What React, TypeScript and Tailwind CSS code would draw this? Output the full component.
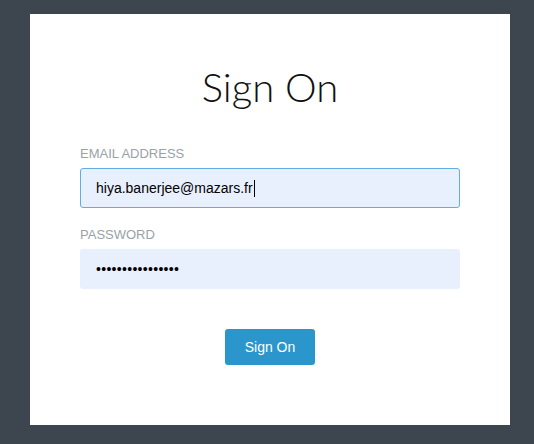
export default function App() {
  return (
    <div className="w-[534px] h-[444px] bg-[#3d464e] pt-[14px] pl-[30px]">
      <div className="w-[480px] h-[411px] bg-white px-[50px] flex flex-col">
        <h1 className="text-center text-[40px] font-light text-[#111] mt-[49px] leading-[48px] [font-family:Lato,'Open_Sans',sans-serif]">
          Sign On
        </h1>
        <div className="mt-[35px] text-[13px] leading-[16px] text-[#9aa2a8] uppercase [font-family:'Liberation_Sans',Arial,sans-serif]">
          Email Address
        </div>
        <div className="mt-[6px] h-[40px] bg-[#e8f0fe] border border-[#62ade0] rounded-[3px] flex items-center pl-[15px] text-[14px] text-black [font-family:'Liberation_Sans',Arial,sans-serif]">
          <span>hiya.banerjee@mazars.fr</span>
          <span className="inline-block w-px h-[17px] bg-black ml-px"></span>
        </div>
        <div className="mt-[19px] text-[13px] leading-[16px] text-[#9aa2a8] uppercase [font-family:'Liberation_Sans',Arial,sans-serif]">
          Password
        </div>
        <div className="mt-[6px] h-[40px] bg-[#e8f0fe] rounded-[3px] flex items-center pl-[16px] text-[14px] text-black [font-family:'Liberation_Sans',Arial,sans-serif]">
          <span className="tracking-[0.3px]">••••••••••••••••</span>
        </div>
        <div className="flex justify-center mt-[40px]">
          <button className="w-[90px] h-[36px] bg-[#2b96cc] text-white text-[14px] rounded-[3px] [font-family:'Liberation_Sans',Arial,sans-serif]">
            Sign On
          </button>
        </div>
      </div>
    </div>
  );
}
